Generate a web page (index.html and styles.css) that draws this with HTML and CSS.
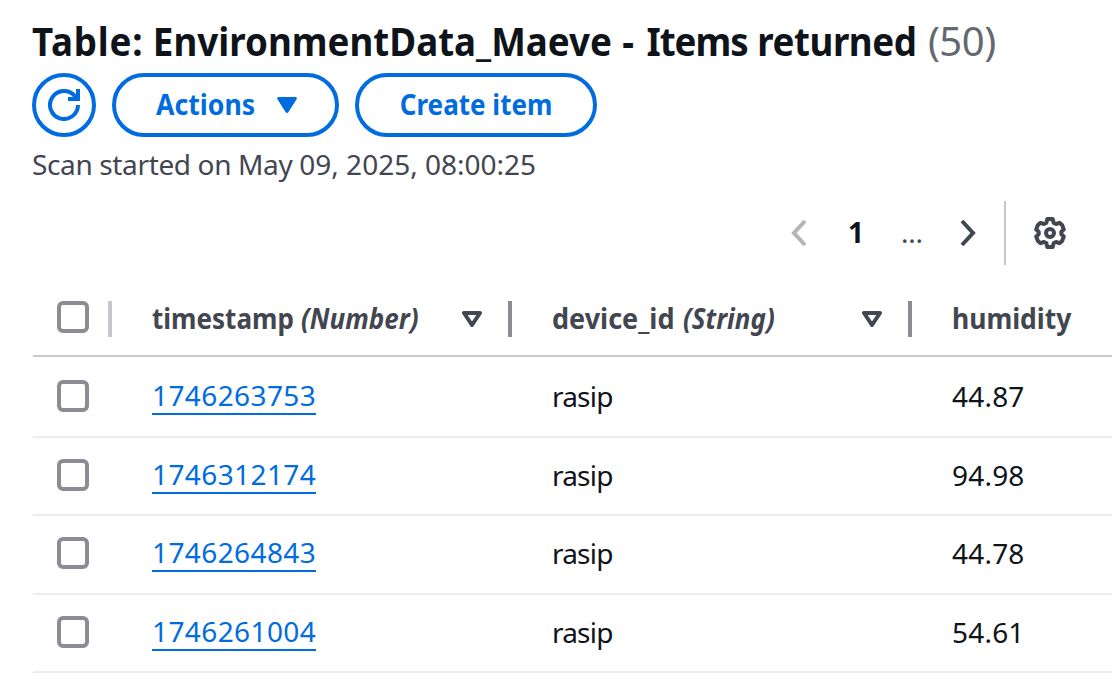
FILE: index.html
```html
<!DOCTYPE html>
<html lang="en">
<head>
<meta charset="utf-8">
<title>Items returned</title>
<link rel="stylesheet" href="styles.css">
</head>
<body>
<main class="panel">
  <h1 class="title"><span class="title-name"><span class="t-prefix">Table:</span> EnvironmentData_Maeve <span class="t-dash">-</span> <span class="t-items">Items</span> <span class="t-returned">returned</span></span> <span class="count">(50)</span></h1>
  <div class="actions">
    <button class="btn btn-icon" aria-label="Refresh">
      <svg width="32" height="32" viewBox="0 0 32 32" fill="none" stroke="currentColor" stroke-width="4"><path d="M30 16A14 14 0 1 1 27 7.300L30 10.500"/><path d="M30 0v10H20"/></svg>
    </button>
    <button class="btn btn-menu"><span>Actions</span>
      <svg width="20" height="16" viewBox="0 0 20 16"><path d="M2 0h16q2.500 0 1.700 2L11.500 15Q10 17 8.500 15L.3 2Q-.5 0 2 0z" fill="currentColor"/></svg>
    </button>
    <button class="btn btn-create"><span>Create item</span></button>
  </div>
  <p class="description">Scan started on May <time>09, 2025, 08:00:25</time></p>
  <nav class="tools">
    <svg class="prev" width="16" height="28" viewBox="0 0 16 28"><path d="M14 2L3 14l11 12"/></svg>
    <b class="page">1</b>
    <span class="dots">...</span>
    <svg class="next" width="16" height="28" viewBox="0 0 16 28"><path d="M2 2l11 12L2 26"/></svg>
    <span class="divider"></span>
    <svg class="gear" width="32" height="32" viewBox="0 0 32 32"><path d="M13.300 2h5.400l1 4 2.300 1 3.500-1.200 2.600 2.200 1.700 4.500-2.500 2.200v2.600l2.500 2.200-1.700 4.500-2.600 2.200-3.500-1.200-2.300 1-1 4h-5.400l-1-4-2.300-1-3.500 1.200-2.600-2.200-1.700-4.500 2.500-2.200v-2.600l-2.500-2.200 1.700-4.500 2.600-2.200 3.500 1.200 2.300-1z"/><circle cx="16" cy="16" r="4"/></svg>
  </nav>
  <div class="table">
    <div class="row head">
      <span class="check-cell"><i class="check"></i></span>
      <span class="cell"><span class="h-time">timestamp</span> <em class="h-number">(Number)</em><svg class="sort" width="20" height="16" viewBox="0 0 20 16"><path d="M2 2h16l-8 12z"/></svg></span>
      <span class="cell"><span class="h-device">device_id</span> <em class="h-string">(String)</em><svg class="sort" width="20" height="16" viewBox="0 0 20 16"><path d="M2 2h16l-8 12z"/></svg></span>
      <span class="cell"><span class="h-humidity">humidity</span></span>
    </div>
    <div class="row first"><span class="check-cell"><i class="check"></i></span><span class="cell"><a class="link">1746263753</a></span><span class="cell text">rasip</span><span class="cell value">44.87</span></div>
    <div class="row"><span class="check-cell"><i class="check"></i></span><span class="cell"><a class="link">1746312174</a></span><span class="cell text">rasip</span><span class="cell value">94.98</span></div>
    <div class="row third"><span class="check-cell"><i class="check"></i></span><span class="cell"><a class="link">1746264843</a></span><span class="cell text">rasip</span><span class="cell value">44.78</span></div>
    <div class="row"><span class="check-cell"><i class="check"></i></span><span class="cell"><a class="link">1746261004</a></span><span class="cell text">rasip</span><span class="cell value">54.61</span></div>
  </div>
</main>
</body>
</html>
```
FILE: styles.css
```css
* { box-sizing: border-box; }
body { margin: 0; background: #fff; color: #0f141a; font: 28px/40px "Noto Sans", "Open Sans", sans-serif; overflow: hidden; }
.panel { padding: 17px 0 0 32px; height: 686px; overflow: hidden; }
.title { margin: 0; height: 56px; font-size: 40px; line-height: 48px; font-weight: 700; white-space: nowrap; }
.title-name { display: inline-block; transform: scaleX(.918); transform-origin: left; margin-right: -78px; }
.t-prefix { letter-spacing: .85px; }
.t-dash { letter-spacing: 3px; margin-left: 1px; }
.t-items { letter-spacing: -1.100px; }
.t-returned { letter-spacing: -.5px; }
.count { font-weight: 400; color: #656871; letter-spacing: -.5px; }
.actions { display: flex; gap: 16px; }
.btn { height: 64px; border: 4px solid #006ce0; border-radius: 32px; background: #fff; color: #006ce0; font: 700 28px/40px "Noto Sans", sans-serif; padding: 0; display: flex; align-items: center; white-space: nowrap; }
.btn span { margin-top: -2px; }
.btn-icon { width: 64px; justify-content: center; }
.btn-menu { width: 227px; padding-left: 40px; justify-content: space-between; padding-right: 38px; }
.btn-menu span { transform: scaleX(.952); transform-origin: left; }
.btn-create { width: 242px; justify-content: center; }
.btn-create span { transform: scaleX(.93); }
.description { margin: 7px 0 0; color: #424650; white-space: nowrap; letter-spacing: -.36px; }
.description time { letter-spacing: 0; }
.tools { display: flex; align-items: center; height: 64px; margin-top: 17px; padding-left: 759px; color: #424650; }
.tools path, .gear circle { fill: none; stroke: currentColor; stroke-width: 4; }
.prev { color: #b4b4bb; }
.page { margin: -2px 0 0 41px; width: 16px; color: #0f141a; }
.dots { margin: -2px 0 0 37px; width: 24px; letter-spacing: -.3px; }
.next { margin-left: 35px; }
.divider { width: 2px; height: 64px; margin-left: 28px; background: #c6c6cd; }
.gear { margin-left: 28px; }
.gear path { stroke-linejoin: round; }
.table { margin-top: 16px; }
.row { display: grid; grid-template-columns: 78px 400px 400px 200px; height: 78px; padding-top: 21px; border-bottom: 2px solid #ebebf0; border-left: 2px solid transparent; align-items: start; }
.row.first { height: 81px; padding-top: 23px; }
.row.third { height: 79px; }
.row.head { height: 76px; padding-top: 20px; border-bottom-color: #c6c6cd; font-weight: 700; color: #424650; }
.check-cell { padding-left: 23px; display: flex; }
.check { width: 32px; height: 32px; border: 4px solid #8c8c94; border-radius: 6px; }
.cell { display: flex; align-items: flex-start; margin-top: -4px; padding-left: 40px; white-space: nowrap; }
.head .cell { align-items: center; gap: 8px; height: 36px; margin: 0 0 0 -4px; border-left: 4px solid #8c8c94; }
.head .cell > span, .head em { margin-top: -2px; transform-origin: left; }
.head .h-time { transform: scaleX(.93); margin-right: -12px; }
.head .h-number { transform: scaleX(.93); }
.head .h-device { transform: scaleX(.965); margin-right: -4px; }
.head .h-string { transform: scaleX(.925); }
.head .h-humidity { transform: scaleX(.945); }
.head .check-cell + .cell { border-color: #c6c6cd; }
.sort { margin-left: auto; margin-right: 30px; }
.sort path { fill: none; stroke: #424650; stroke-width: 4; stroke-linejoin: round; }
.link { margin-top: 1px; color: #006ce0; border-bottom: 2px solid; line-height: 36px; letter-spacing: .4px; }
.text { letter-spacing: -.8px; }
.value { letter-spacing: .2px; }
```
